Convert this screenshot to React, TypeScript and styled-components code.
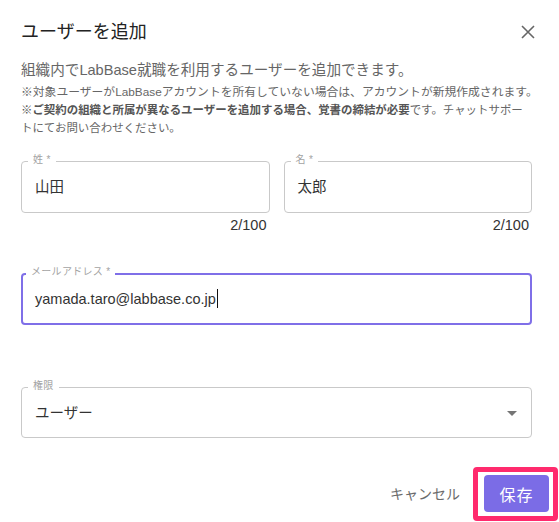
import React from 'react'
import styled, { createGlobalStyle } from 'styled-components'

const GlobalStyle = createGlobalStyle`
  html, body {
    margin: 0;
    padding: 0;
    background: #fff;
  }
  body {
    font-family: 'Liberation Sans', 'Noto Sans CJK JP', sans-serif;
    color: #333;
  }
`

const Dialog = styled.div`
  width: 559px;
  height: 522px;
  background: #fff;
  display: flex;
  flex-direction: column;
  overflow: hidden;
`

const Header = styled.div`
  display: flex;
  align-items: center;
  justify-content: space-between;
  padding: 18px 21px 0 21px;
  height: 28px;
`

const Title = styled.h2`
  margin: 0;
  font-size: 18px;
  line-height: 28px;
  font-weight: 400;
  color: #222;
`

const CloseButton = styled.button`
  border: none;
  background: none;
  padding: 0;
  width: 16px;
  height: 16px;
  display: flex;
  align-items: center;
  justify-content: center;
  margin-right: 2px;
  cursor: pointer;
`

const Content = styled.div`
  padding: 13px 27px 0 21px;
  display: flex;
  flex-direction: column;
`

const Lead = styled.p`
  margin: 0;
  font-size: 14.6px;
  line-height: 22px;
  color: #666;
`

const Note = styled.p<{ $size?: number }>`
  margin: 2px -12px 0 0;
  font-size: ${({ $size }) => $size ?? 11.45}px;
  line-height: 18px;
  color: #666;
  white-space: nowrap;
  & + & {
    margin-top: 0;
  }
`

const Strong = styled.strong`
  font-weight: 700;
  color: #555;
`

const NameRow = styled.div`
  display: grid;
  grid-template-columns: 1fr 1fr;
  column-gap: 14px;
  margin-top: 24px;
`

const FieldColumn = styled.div`
  display: flex;
  flex-direction: column;
`

const Box = styled.div<{ $focused?: boolean; $height?: number }>`
  position: relative;
  box-sizing: border-box;
  height: ${({ $height }) => $height ?? 52}px;
  border: ${({ $focused }) => ($focused ? '2px solid #7f6fe8' : '1px solid #c9c9c9')};
  border-radius: 4px;
  display: flex;
  align-items: center;
  padding: ${({ $focused }) => ($focused ? '0 12px' : '0 13px')};
`

const Label = styled.span<{ $focused?: boolean }>`
  position: absolute;
  top: ${({ $focused }) => ($focused ? '-9px' : '-8px')};
  left: ${({ $focused }) => ($focused ? '3px' : '6px')};
  padding: 0 5px;
  background: #fff;
  font-size: 10px;
  line-height: 12px;
  color: #a3a3a3;
  letter-spacing: 0.3px;
`

const Value = styled.span`
  font-size: 14.5px;
  line-height: 20px;
  color: #333;
`

const Caret = styled.span`
  display: inline-block;
  width: 1px;
  height: 19px;
  background: #111;
  margin-left: 1px;
  vertical-align: -4px;
`

const Counter = styled.div`
  margin-top: 4px;
  padding-right: 3px;
  text-align: right;
  font-size: 14.5px;
  line-height: 16px;
  color: #333;
`

const EmailField = styled.div`
  margin-top: 40px;
`

const SelectField = styled.div`
  margin-top: 62px;
`

const Arrow = styled.svg`
  margin-left: auto;
  margin-right: -6px;
  width: 24px;
  height: 24px;
  fill: #757575;
`

const Footer = styled.div`
  display: flex;
  justify-content: flex-end;
  align-items: center;
  gap: 13px;
  padding: 29px 1px 0 0;
`

const CancelButton = styled.button`
  border: none;
  background: none;
  padding: 0;
  font-family: inherit;
  font-size: 14px;
  line-height: 20px;
  color: #6b6b6b;
  cursor: pointer;
`

const Highlight = styled.div`
  border: 5px solid #ff2a6d;
  border-radius: 4px;
  padding: 3px 4px 4px 6px;
  background: #fff;
`

const SaveButton = styled.button`
  display: block;
  width: 65px;
  height: 37px;
  border: none;
  border-radius: 4px;
  background: #7b6ce6;
  color: #fff;
  font-family: inherit;
  font-size: 16px;
  letter-spacing: 1px;
  cursor: pointer;
`

const App: React.FC = () => {
  return (
    <>
      <GlobalStyle />
      <Dialog>
        <Header>
          <Title>ユーザーを追加</Title>
          <CloseButton aria-label="close">
            <svg width="14" height="14" viewBox="0 0 14 14">
              <path d="M1 1L13 13M13 1L1 13" stroke="#666" strokeWidth="1.6" />
            </svg>
          </CloseButton>
        </Header>
        <Content>
          <Lead>組織内でLabBase就職を利用するユーザーを追加できます。</Lead>
          <Note $size={11.8}>※対象ユーザーがLabBaseアカウントを所有していない場合は、アカウントが新規作成されます。</Note>
          <Note>
            <Strong>※ご契約の組織と所属が異なるユーザーを追加する場合、覚書の締結が必要</Strong>
            です。チャットサポー
            <br />
            トにてお問い合わせください。
          </Note>

          <NameRow>
            <FieldColumn>
              <Box>
                <Label>姓 *</Label>
                <Value>山田</Value>
              </Box>
              <Counter>2/100</Counter>
            </FieldColumn>
            <FieldColumn>
              <Box>
                <Label>名 *</Label>
                <Value>太郎</Value>
              </Box>
              <Counter>2/100</Counter>
            </FieldColumn>
          </NameRow>

          <EmailField>
            <Box $focused>
              <Label $focused>メールアドレス *</Label>
              <Value>
                yamada.taro@labbase.co.jp
                <Caret />
              </Value>
            </Box>
          </EmailField>

          <SelectField>
            <Box $height={51}>
              <Label>権限</Label>
              <Value>ユーザー</Value>
              <Arrow viewBox="0 0 24 24">
                <path d="M7 10l5 5 5-5z" />
              </Arrow>
            </Box>
          </SelectField>
        </Content>
        <Footer>
          <CancelButton>キャンセル</CancelButton>
          <Highlight>
            <SaveButton>保存</SaveButton>
          </Highlight>
        </Footer>
      </Dialog>
    </>
  )
}

export default App
